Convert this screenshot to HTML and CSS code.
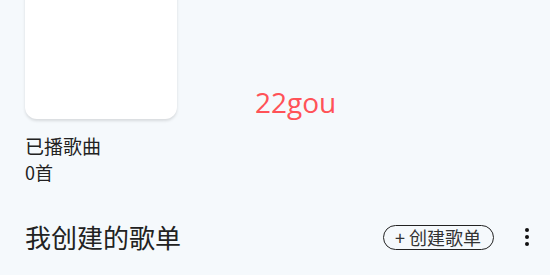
FILE: index.html
```html
<!DOCTYPE html>
<html lang="zh">
<head>
<meta charset="utf-8">
<link rel="stylesheet" href="styles.css">
</head>
<body>
<div class="page">
  <div class="recent">
    <div class="card"></div>
    <div class="card-title">已播歌曲</div>
    <div class="card-count">0首</div>
  </div>
  <div class="section-head">
    <div class="section-title">我创建的歌单</div>
    <div class="actions">
      <button class="create-btn">+ 创建歌单</button>
      <div class="more"><span></span><span></span><span></span></div>
    </div>
  </div>
  <div class="watermark">22gou</div>
</div>
</body>
</html>
```
FILE: styles.css
```css
* { box-sizing: border-box; }
html, body { margin: 0; padding: 0; }
body {
  width: 550px;
  height: 275px;
  overflow: hidden;
  background: #f5f9fc;
  font-family: "Noto Sans CJK SC", "Noto Sans", sans-serif;
  color: #222;
}
.page {
  position: relative;
  padding: 0 21px 0 25px;
}
.recent {
  display: flex;
  flex-direction: column;
}
.card {
  width: 152px;
  height: 152px;
  margin-top: -33px;
  background: #fff;
  border-radius: 12px;
  box-shadow: 0 2px 3px rgba(0, 0, 0, 0.12);
}
.card-title {
  margin-top: 14px;
  font-size: 19px;
  line-height: 26px;
}
.card-count {
  font-size: 18px;
  line-height: 26px;
}
.section-head {
  margin-top: 36px;
  display: flex;
  align-items: center;
  justify-content: space-between;
}
.section-title {
  font-size: 26px;
  line-height: 32px;
}
.actions {
  display: flex;
  align-items: center;
  gap: 31px;
}
.create-btn {
  font-family: inherit;
  font-size: 18px;
  line-height: 21px;
  color: #333;
  background: transparent;
  border: 1.5px solid #222;
  border-radius: 14px;
  padding: 1px 12px 1px 11px;
}
.more {
  display: flex;
  flex-direction: column;
  gap: 3px;
  width: 4px;
}
.more span {
  width: 4px;
  height: 4px;
  border-radius: 50%;
  background: #111;
}
.watermark {
  position: absolute;
  left: 255px;
  top: 83px;
  font-family: "Open Sans", sans-serif;
  font-size: 28px;
  color: #ff5257;
}
```
